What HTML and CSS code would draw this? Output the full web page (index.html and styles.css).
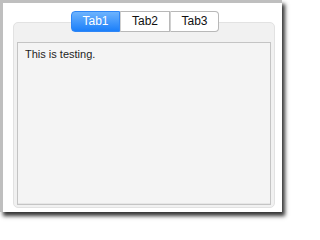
FILE: index.html
```html
<!DOCTYPE html>
<html>
<head>
<meta charset="utf-8">
<link rel="stylesheet" href="styles.css">
</head>
<body>
<div class="window">
  <div class="tabs">
    <div class="tab active">Tab1</div>
    <div class="tab">Tab2</div>
    <div class="tab">Tab3</div>
  </div>
  <div class="group">
    <div class="panel">This is testing.</div>
  </div>
</div>
</body>
</html>
```
FILE: styles.css
```css
html, body {
  margin: 0;
  padding: 0;
  background: #ffffff;
}
body {
  width: 295px;
  height: 225px;
  overflow: hidden;
  font-family: "Liberation Sans", Arial, sans-serif;
}
.window {
  box-sizing: border-box;
  width: 282px;
  height: 212px;
  background: #ffffff;
  border-top: 3px solid #bfbfbf;
  border-left: 3px solid #bfbfbf;
  box-shadow: 3px 4px 4px rgba(0, 0, 0, 0.8);
  padding: 8px 7px 4px 10px;
  display: flex;
  flex-direction: column;
}
.tabs {
  display: flex;
  justify-content: center;
  position: relative;
  z-index: 1;
  height: 21px;
  margin-left: 2px;
}
.tab {
  box-sizing: border-box;
  width: 50px;
  height: 21px;
  line-height: 19px;
  font-size: 12px;
  text-align: center;
  color: #111111;
  background: #ffffff;
  border: 1px solid #b8b8b8;
  border-left: 1px solid #d0d0d0;
}
.tab:first-child {
  width: 49px;
  border-radius: 4px 0 0 4px;
  border-left: 1px solid #b8b8b8;
}
.tab:last-child {
  width: 49px;
  border-radius: 0 4px 4px 0;
}
.tab.active {
  color: #ffffff;
  background: linear-gradient(#6db3fd, #1b7ffa);
  border-color: #2f86f5;
}
.group {
  flex: 1;
  margin-top: -10px;
  background: #f1f1f1;
  border: 1px solid #e2e2e2;
  border-radius: 5px;
  padding: 19px 3px 2px 3px;
  display: flex;
}
.panel {
  flex: 1;
  background: #f4f4f4;
  border: 1px solid #c4c4c4;
  box-shadow: inset 0 -1px 0 #e6e6e6;
  font-size: 11px;
  color: #1e1e1e;
  padding: 5px 7px;
  line-height: 13px;
}
```
